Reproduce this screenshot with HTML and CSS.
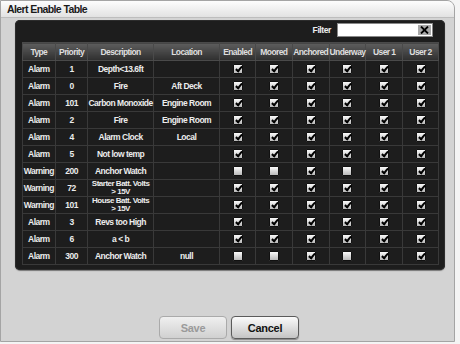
FILE: index.html
```html
<!DOCTYPE html>
<html lang="en">
<head>
    <meta charset="UTF-8">
    <title>Alert Enable Table</title>
    <link rel="stylesheet" href="styles.css">
</head>
<body>
    <div class="window">
        <div class="titlebar">Alert Enable Table</div>
        <div class="panel">
            <div class="filter-row">
                <label for="filter">Filter</label>
                <div class="filter-box">
                    <input type="text" id="filter">
                    <span class="clear-btn">
                        <svg width="9" height="8" viewBox="0 0 9 8"><path d="M1 0.5 L8 7.5 M8 0.5 L1 7.5" stroke="#000" stroke-width="1.8"/></svg>
                    </span>
                </div>
            </div>
            <table class="alerts">
                <colgroup>
                    <col class="c-type"><col class="c-prio"><col class="c-desc"><col class="c-loc">
                    <col class="c-en"><col class="c-chk"><col class="c-chk"><col class="c-chk"><col class="c-chk"><col class="c-en">
                </colgroup>
                <thead>
                    <tr>
                        <th>Type</th>
                        <th>Priority</th>
                        <th>Description</th>
                        <th>Location</th>
                        <th>Enabled</th>
                        <th>Moored</th>
                        <th>Anchored</th>
                        <th>Underway</th>
                        <th>User 1</th>
                        <th>User 2</th>
                    </tr>
                </thead>
                <tbody>
                    <tr>
                        <td>Alarm</td><td>1</td><td>Depth&lt;13.6ft</td><td></td>
                        <td><span class="cb on"></span></td><td><span class="cb on"></span></td><td><span class="cb on"></span></td><td><span class="cb on"></span></td><td><span class="cb on"></span></td><td><span class="cb on"></span></td>
                    </tr>
                    <tr>
                        <td>Alarm</td><td>0</td><td>Fire</td><td>Aft Deck</td>
                        <td><span class="cb on"></span></td><td><span class="cb on"></span></td><td><span class="cb on"></span></td><td><span class="cb on"></span></td><td><span class="cb on"></span></td><td><span class="cb on"></span></td>
                    </tr>
                    <tr>
                        <td>Alarm</td><td>101</td><td>Carbon Monoxide</td><td>Engine Room</td>
                        <td><span class="cb on"></span></td><td><span class="cb on"></span></td><td><span class="cb on"></span></td><td><span class="cb on"></span></td><td><span class="cb on"></span></td><td><span class="cb on"></span></td>
                    </tr>
                    <tr>
                        <td>Alarm</td><td>2</td><td>Fire</td><td>Engine Room</td>
                        <td><span class="cb on"></span></td><td><span class="cb on"></span></td><td><span class="cb on"></span></td><td><span class="cb on"></span></td><td><span class="cb on"></span></td><td><span class="cb on"></span></td>
                    </tr>
                    <tr>
                        <td>Alarm</td><td>4</td><td>Alarm Clock</td><td>Local</td>
                        <td><span class="cb on"></span></td><td><span class="cb on"></span></td><td><span class="cb on"></span></td><td><span class="cb on"></span></td><td><span class="cb on"></span></td><td><span class="cb on"></span></td>
                    </tr>
                    <tr>
                        <td>Alarm</td><td>5</td><td>Not low temp</td><td></td>
                        <td><span class="cb on"></span></td><td><span class="cb on"></span></td><td><span class="cb on"></span></td><td><span class="cb on"></span></td><td><span class="cb on"></span></td><td><span class="cb on"></span></td>
                    </tr>
                    <tr>
                        <td>Warning</td><td>200</td><td>Anchor Watch</td><td></td>
                        <td><span class="cb"></span></td><td><span class="cb"></span></td><td><span class="cb on"></span></td><td><span class="cb"></span></td><td><span class="cb on"></span></td><td><span class="cb on"></span></td>
                    </tr>
                    <tr>
                        <td>Warning</td><td>72</td><td class="two-line">Starter Batt. Volts<br>&gt; 15V</td><td></td>
                        <td><span class="cb on"></span></td><td><span class="cb on"></span></td><td><span class="cb on"></span></td><td><span class="cb on"></span></td><td><span class="cb on"></span></td><td><span class="cb on"></span></td>
                    </tr>
                    <tr>
                        <td>Warning</td><td>101</td><td class="two-line">House Batt. Volts<br>&gt; 15V</td><td></td>
                        <td><span class="cb on"></span></td><td><span class="cb on"></span></td><td><span class="cb on"></span></td><td><span class="cb on"></span></td><td><span class="cb on"></span></td><td><span class="cb on"></span></td>
                    </tr>
                    <tr>
                        <td>Alarm</td><td>3</td><td>Revs too High</td><td></td>
                        <td><span class="cb on"></span></td><td><span class="cb on"></span></td><td><span class="cb on"></span></td><td><span class="cb on"></span></td><td><span class="cb on"></span></td><td><span class="cb on"></span></td>
                    </tr>
                    <tr>
                        <td>Alarm</td><td>6</td><td>a &lt; b</td><td></td>
                        <td><span class="cb on"></span></td><td><span class="cb on"></span></td><td><span class="cb on"></span></td><td><span class="cb on"></span></td><td><span class="cb on"></span></td><td><span class="cb on"></span></td>
                    </tr>
                    <tr>
                        <td>Alarm</td><td>300</td><td>Anchor Watch</td><td>null</td>
                        <td><span class="cb"></span></td><td><span class="cb"></span></td><td><span class="cb on"></span></td><td><span class="cb"></span></td><td><span class="cb on"></span></td><td><span class="cb on"></span></td>
                    </tr>
                </tbody>
            </table>
        </div>
        <div class="footer">
            <button class="btn" disabled>Save</button>
            <button class="btn btn-cancel">Cancel</button>
        </div>
    </div>
</body>
</html>
```

FILE: styles.css
```css
body {
    margin: 0;
    background-color: #f4f4f4;
    font-family: 'Liberation Sans', Arial, sans-serif;
}
.window {
    box-sizing: border-box;
    width: 455px;
    height: 342px;
    background-color: #d3d3d3;
    border: 1px solid #a4a4a4;
    border-radius: 0 8px 0 0;
    overflow: hidden;
}
.titlebar {
    height: 16px;
    line-height: 16px;
    padding-left: 6px;
    font-size: 10.5px;
    font-weight: bold;
    letter-spacing: -0.6px;
    color: #1a1a1a;
    background: linear-gradient(#fdfdfd, #e2e2e2);
    border-bottom: 1px solid #bdbdbd;
}
.panel {
    box-sizing: border-box;
    width: 430px;
    height: 250px;
    margin: 2px 0 0 14px;
    padding: 3px 6px 0 7px;
    background-color: #1d1d1d;
    border-radius: 5px;
    box-shadow: 0 1px 1px #777, inset 0 0 0 1px #2c2c2c;
}
.filter-row {
    display: flex;
    justify-content: flex-end;
    align-items: center;
    gap: 6px;
    height: 14px;
    padding-right: 6px;
    margin-bottom: 5px;
}
.filter-row label {
    color: #eee;
    font-size: 8.5px;
    font-weight: bold;
    letter-spacing: -0.4px;
}
.filter-box {
    display: flex;
    align-items: center;
    box-sizing: border-box;
    width: 96px;
    height: 14px;
    background-color: #fff;
    border: 1px solid #888;
    padding-right: 1px;
}
.filter-box input {
    flex: 1;
    min-width: 0;
    border: none;
    padding: 0 2px;
    height: 10px;
    outline: none;
}
.clear-btn {
    display: flex;
    align-items: center;
    justify-content: center;
    width: 13px;
    height: 10px;
    background-color: #a9a9a9;
}
.alerts {
    border-collapse: collapse;
    table-layout: fixed;
    width: 417px;
    color: #ececec;
    font-size: 8.5px;
    font-weight: bold;
    letter-spacing: -0.5px;
}
.alerts th, .alerts td {
    border: 1px solid #393939;
    padding: 0;
    text-align: center;
    white-space: nowrap;
}
.alerts th {
    height: 17px;
    color: #dedede;
    letter-spacing: -0.6px;
    background: linear-gradient(#5e5e5e, #2e2e2e);
    border-color: #4a4a4a;
}
.alerts td {
    height: 16px;
}
.alerts td.two-line {
    font-size: 8px;
    line-height: 8px;
}
.c-type, .c-prio { width: 32px; }
.c-desc { width: 64px; }
.c-loc { width: 65px; }
.c-en { width: 35px; }
.c-chk { width: 36px; }
.cb {
    position: relative;
    display: inline-block;
    vertical-align: middle;
    box-sizing: border-box;
    width: 10px;
    height: 10px;
    background: linear-gradient(#fafafa, #b9b9b9);
    border: 1px solid #111;
    border-radius: 1px;
}
.cb.on::after {
    content: '';
    position: absolute;
    left: 3px;
    top: 0;
    width: 2px;
    height: 5px;
    border-right: 2px solid #000;
    border-bottom: 2px solid #000;
    transform: rotate(40deg);
}
.footer {
    display: flex;
    justify-content: center;
    gap: 4px;
    margin-top: 46px;
    padding-left: 3px;
}
.btn {
    width: 68px;
    height: 23px;
    font-family: 'Liberation Sans', Arial, sans-serif;
    font-size: 11px;
    font-weight: bold;
    letter-spacing: -0.3px;
    color: #111;
    background: linear-gradient(#fbfbfb, #c4c4c4);
    border: 1px solid #5b5b5b;
    border-radius: 4px;
    box-shadow: 0 1px 1px #888;
}
.btn:disabled {
    color: #9a9a9a;
    border-color: #aaa;
    background: linear-gradient(#f0f0f0, #d0d0d0);
    box-shadow: none;
}
```
